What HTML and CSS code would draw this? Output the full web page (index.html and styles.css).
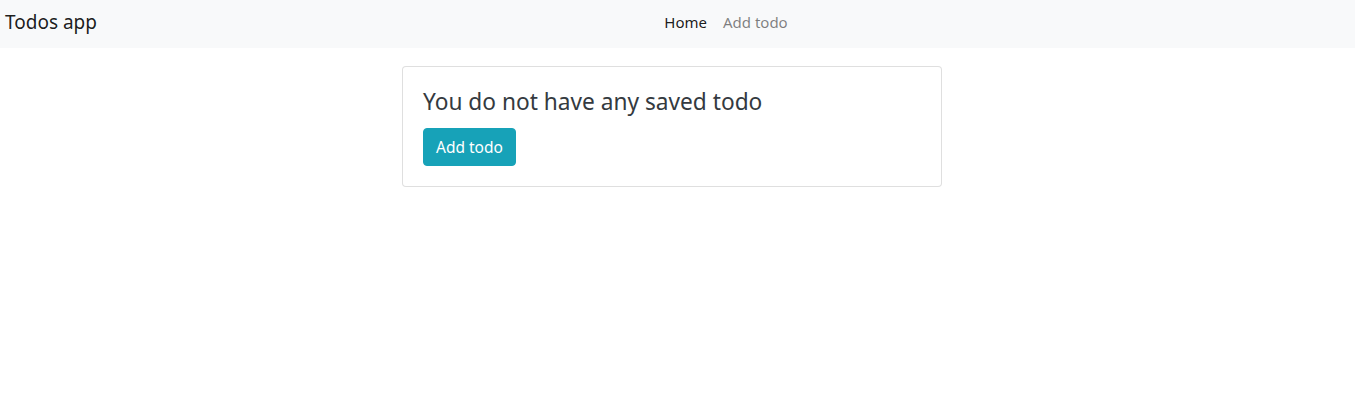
FILE: index.html
```html
<!DOCTYPE html>
<html lang="en">
<head>
<meta charset="utf-8">
<title>Todos app</title>
<link rel="stylesheet" href="styles.css">
</head>
<body>
<nav class="navbar">
  <a class="brand" href="#">Todos app</a>
  <ul class="nav">
    <li><a class="nav-link active" href="#">Home</a></li>
    <li><a class="nav-link" href="#">Add todo</a></li>
  </ul>
</nav>
<main class="main">
  <section class="card">
    <h4 class="card-title">You do not have any saved todo</h4>
    <a class="btn" href="#">Add todo</a>
  </section>
</main>
</body>
</html>
```
FILE: styles.css
```css
* { box-sizing: border-box; }
html, body { margin: 0; padding: 0; }
body {
  font-family: "Noto Sans", "Open Sans", "Liberation Sans", sans-serif;
  font-size: 16px;
  line-height: 1.5;
  color: #212529;
  background: #fff;
}
.navbar {
  display: flex;
  align-items: center;
  height: 48px;
  padding: 0 5px 4px;
  background: #f8f9fa;
}
.brand {
  font-size: 19px;
  line-height: 30px;
  color: rgba(0,0,0,.9);
  text-decoration: none;
  margin-right: 16px;
}
.nav {
  flex: 1;
  display: flex;
  justify-content: center;
  list-style: none;
  margin: 0;
  padding: 0 11px 0 0;
}
.nav-link {
  display: block;
  padding: 8px;
  font-size: 15px;
  color: rgba(0,0,0,.5);
  text-decoration: none;
}
.nav-link.active { color: rgba(0,0,0,.9); }
.main {
  display: flex;
  justify-content: center;
  padding: 18px 11px 0 0;
}
.card {
  width: 540px;
  padding: 20px;
  border: 1px solid rgba(0,0,0,.125);
  border-radius: 4px;
  background: #fff;
}
.card-title {
  margin: 0 0 11px;
  font-size: 22.7px;
  font-weight: 400;
  line-height: 30px;
  color: #343a40;
}
.btn {
  display: inline-block;
  padding: 6px 12px;
  font-size: 15.5px;
  line-height: 24px;
  color: #fff;
  background: #17a2b8;
  border: 1px solid #17a2b8;
  border-radius: 4px;
  text-decoration: none;
}
```
